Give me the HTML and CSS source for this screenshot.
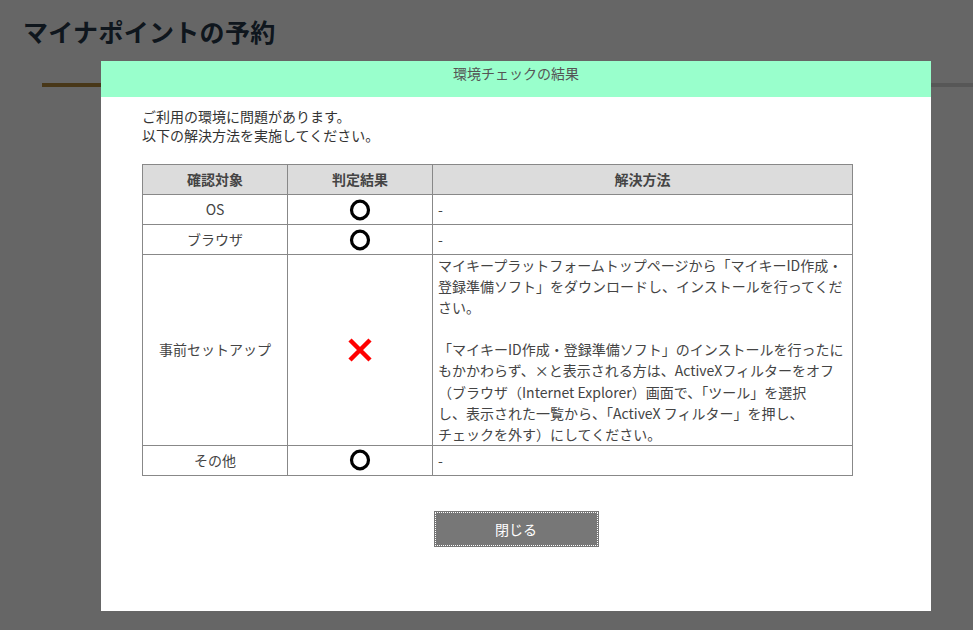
FILE: index.html
```html
<!DOCTYPE html>
<html lang="ja">
<head>
    <meta charset="UTF-8">
    <meta name="viewport" content="width=device-width, initial-scale=1.0">
    <title>マイナポイントの予約</title>
    <link rel="stylesheet" href="styles.css">
</head>
<body>
    <div class="page">
        <h1 class="page-title">マイナポイントの予約</h1>
        <div class="page-rule"></div>
    </div>

    <div class="overlay"></div>

    <div class="modal">
        <div class="modal-header">環境チェックの結果</div>
        <div class="modal-body">
            <p class="message">ご利用の環境に問題があります。<br>以下の解決方法を実施してください。</p>

            <table class="check-table">
                <thead>
                    <tr>
                        <th class="col-target">確認対象</th>
                        <th class="col-result">判定結果</th>
                        <th>解決方法</th>
                    </tr>
                </thead>
                <tbody>
                    <tr>
                        <td class="center">OS</td>
                        <td class="center">
                            <svg class="mark" width="22" height="22" viewBox="0 0 22 22"><ellipse cx="11" cy="11" rx="8.5" ry="8.8" fill="none" stroke="#000" stroke-width="3.2"/></svg>
                        </td>
                        <td>-</td>
                    </tr>
                    <tr>
                        <td class="center">ブラウザ</td>
                        <td class="center">
                            <svg class="mark" width="22" height="22" viewBox="0 0 22 22"><ellipse cx="11" cy="11" rx="8.5" ry="8.8" fill="none" stroke="#000" stroke-width="3.2"/></svg>
                        </td>
                        <td>-</td>
                    </tr>
                    <tr>
                        <td class="center">事前セットアップ</td>
                        <td class="center">
                            <svg class="mark" width="26" height="26" viewBox="0 0 26 26"><path d="M3 3 L23 23 M23 3 L3 23" stroke="#f00" stroke-width="4.5"/></svg>
                        </td>
                        <td class="solution">マイキープラットフォームトップページから「マイキーID作成・<br>登録準備ソフト」をダウンロードし、インストールを行ってくだ<br>さい。<br><br>「マイキーID作成・登録準備ソフト」のインストールを行ったに<br>もかかわらず、×と表示される方は、ActiveXフィルターをオフ<br>（ブラウザ（Internet Explorer）画面で、「ツール」を選択<br>し、表示された一覧から、「ActiveX フィルター」を押し、<br>チェックを外す）にしてください。</td>
                    </tr>
                    <tr>
                        <td class="center">その他</td>
                        <td class="center">
                            <svg class="mark" width="22" height="22" viewBox="0 0 22 22"><ellipse cx="11" cy="11" rx="8.5" ry="8.8" fill="none" stroke="#000" stroke-width="3.2"/></svg>
                        </td>
                        <td>-</td>
                    </tr>
                </tbody>
            </table>

            <div class="actions">
                <button class="close-btn">閉じる</button>
            </div>
        </div>
    </div>
</body>
</html>
```

FILE: styles.css
```css
* {
    margin: 0;
    padding: 0;
    box-sizing: border-box;
}

body {
    background-color: #fff;
    font-family: "Noto Sans CJK JP", "Noto Sans", sans-serif;
    font-size: 14px;
    color: #333;
    overflow: hidden;
}

.page {
    padding: 14px 0 0 23px;
}

.page-title {
    font-size: 25px;
    font-weight: bold;
    color: #26384a;
    line-height: 34px;
    letter-spacing: 0.3px;
}

.page-rule {
    height: 4px;
    margin: 35px 0 0 19px;
    background: linear-gradient(to right, #b38a3c 0, #b38a3c 100px, #d9d9d9 100px);
}

.overlay {
    position: fixed;
    inset: 0;
    background-color: rgba(0, 0, 0, 0.6);
}

.modal {
    position: fixed;
    left: 101px;
    top: 61px;
    width: 830px;
    height: 550px;
    background-color: #fff;
}

.modal-header {
    background-color: #99ffcc;
    height: 36px;
    text-align: center;
    color: #555;
    font-size: 14px;
    line-height: 24px;
}

.modal-body {
    padding: 10px 78px 0 41px;
}

.message {
    line-height: 19px;
    color: #333;
    margin-bottom: 19px;
}

.check-table {
    width: 711px;
    border-collapse: collapse;
    color: #444;
    line-height: 21.1px;
}

.check-table th,
.check-table td {
    border: 1px solid #888;
    padding: 0 5px;
    vertical-align: middle;
}

.check-table th {
    background-color: #dcdcdc;
    font-weight: bold;
    text-align: center;
    height: 30px;
}

.check-table td {
    height: 30px;
    text-align: left;
}

.check-table .solution {
    padding: 0 4px 0 5px;
}

.check-table .center {
    text-align: center;
}

.col-target,
.col-result {
    width: 145px;
}

.mark {
    display: block;
    margin: 0 auto;
}

.actions {
    display: flex;
    justify-content: center;
    margin-top: 35px;
    padding-left: 37px;
}

.close-btn {
    width: 165px;
    height: 36px;
    background-color: #777;
    color: #fff;
    border: none;
    outline: 1px dotted #fff;
    outline-offset: -2px;
    font-family: "Noto Sans CJK JP", "Noto Sans", sans-serif;
    font-size: 14px;
    cursor: pointer;
}
```
